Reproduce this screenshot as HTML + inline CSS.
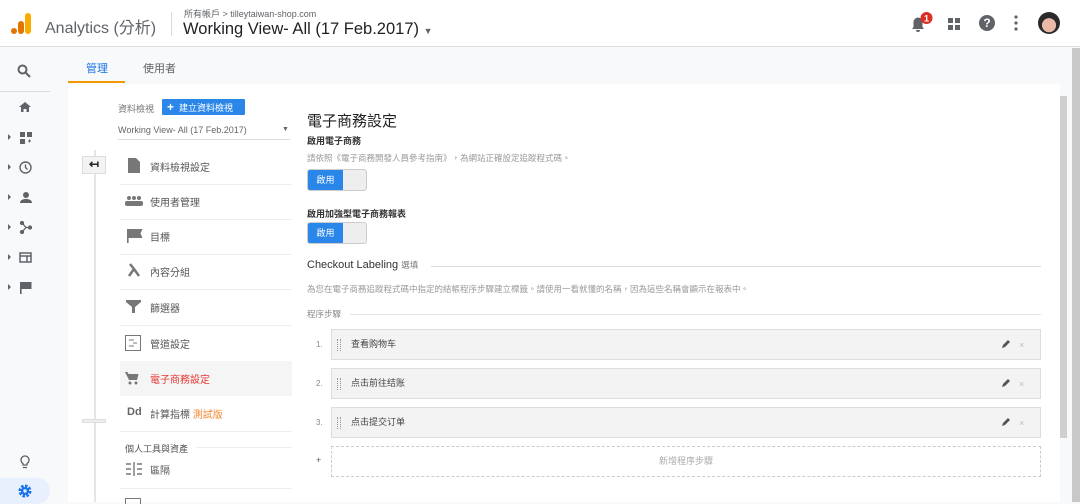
<!DOCTYPE html>
<html><head><meta charset="utf-8"><style>
*{margin:0;padding:0;box-sizing:border-box}
body{width:1080px;height:502px;overflow:hidden;background:#f8f9fa;font-family:"Liberation Sans","Noto Sans CJK TC",sans-serif;color:#333;position:relative}
.a{position:absolute}
.hdr{left:0;top:0;width:1080px;height:47px;background:#fff;border-bottom:1px solid #dadce0}
.nav{left:0;top:48px;width:68px;height:454px;background:#f8f9fa}
.main{left:68px;top:84px;width:992px;height:418px;background:#fff}
.t{font-size:10px;color:#555}
.mi{left:150px;font-size:10px;color:#555}
.sep{left:120px;width:172px;height:1px;background:#eee}
.tog{width:60px;height:22px;border:1px solid #ccc;border-radius:3px;background:#eee;overflow:hidden}
.tog div{width:35px;height:20px;background:#2b86ea;color:#fff;font-size:9px;line-height:20px;text-align:center}
.step{left:331px;width:710px;height:31px;background:#f3f3f3;border:1px solid #ddd;font-size:9px;line-height:29px;padding-left:19px;color:#444}
.num{left:316px;font-size:8px;color:#888}
.dots{left:337px;width:4px;height:12px;border-left:1px dotted #999;border-right:1px dotted #999}
.tri{left:8px;width:0;height:0;border-left:3px solid #666;border-top:3px solid transparent;border-bottom:3px solid transparent}
</style></head><body>
<div class="a hdr"></div>
<svg class="a" style="left:11px;top:13px" width="22" height="22"><rect x="14" y="0" width="6" height="21" rx="3" fill="#f9ab00"/><rect x="7" y="8" width="6" height="13" rx="3" fill="#e37400"/><circle cx="3" cy="18" r="3" fill="#e37400"/></svg>
<div class="a" style="left:45px;top:14px;font-size:16px;color:#5f6368">Analytics (分析)</div>
<div class="a" style="left:171px;top:12px;width:1px;height:24px;background:#dadce0"></div>
<div class="a" style="left:184px;top:7px;font-size:9px;color:#5f6368">所有帳戶 &gt; tilleytaiwan-shop.com</div>
<div class="a" style="left:183px;top:20px;font-size:16.5px;color:#202124">Working View- All (17 Feb.2017) <span style="font-size:9px;color:#5f6368">▼</span></div>
<svg class="a" style="left:910px;top:12px" width="24" height="22"><path d="M2 17h12l-1.5-2V10a4.5 4.5 0 0 0-9 0v5z M6 18h4a2 2 0 0 1-4 0" fill="#5f6368"/><circle cx="16.5" cy="6" r="6" fill="#d93025"/><text x="16.5" y="9.5" font-size="9" fill="#fff" text-anchor="middle" font-family="Liberation Sans" font-weight="bold">1</text></svg>
<svg class="a" style="left:948px;top:18px" width="12" height="12" fill="#5f6368"><rect width="5" height="5"/><rect x="7" width="5" height="5"/><rect y="7" width="5" height="5"/><rect x="7" y="7" width="5" height="5"/></svg>
<div class="a" style="left:979px;top:15px;width:16px;height:16px;border-radius:50%;background:#5f6368;color:#fff;font-size:12px;font-weight:bold;text-align:center;line-height:16px">?</div>
<svg class="a" style="left:1014px;top:15px" width="4" height="16" fill="#5f6368"><circle cx="2" cy="2" r="1.6"/><circle cx="2" cy="8" r="1.6"/><circle cx="2" cy="14" r="1.6"/></svg>
<div class="a" style="left:1038px;top:12px;width:22px;height:22px;border-radius:50%;background:radial-gradient(circle at 50% 60%,#e9b9a8 40%,#2a2a2a 42%)"></div>

<div class="a nav"></div>
<svg class="a" style="left:17px;top:64px" width="14" height="14" fill="none" stroke="#5f6368" stroke-width="2"><circle cx="5.5" cy="5.5" r="4"/><path d="M8.5 8.5l4.5 4.5"/></svg>
<div class="a" style="left:0;top:91px;width:50px;height:1px;background:#dadce0"></div>
<svg class="a" style="left:19px;top:102px" width="12" height="10" fill="#5f6368"><path d="M6 0l6 5h-2v5H7.5V7h-3v3H2V5H0z"/></svg>
<div class="a tri" style="top:134px"></div><svg class="a" style="left:20px;top:132px" width="12" height="12" fill="#5f6368"><rect width="5" height="5"/><rect x="7" width="5" height="5"/><rect y="7" width="5" height="5"/><path d="M8 9h3M9.5 7.5v3" stroke="#5f6368"/></svg>
<div class="a tri" style="top:164px"></div><svg class="a" style="left:19px;top:161px" width="13" height="13" fill="none" stroke="#5f6368" stroke-width="1.4"><circle cx="6.5" cy="6.5" r="5.5"/><path d="M6.5 3.5v3l2 2"/></svg>
<div class="a tri" style="top:194px"></div><svg class="a" style="left:20px;top:192px" width="12" height="11" fill="#5f6368"><circle cx="6" cy="3" r="3"/><path d="M0 11c0-3 3-4 6-4s6 1 6 4z"/></svg>
<div class="a tri" style="top:224px"></div><svg class="a" style="left:19px;top:221px" width="13" height="13" fill="#5f6368" stroke="#5f6368" stroke-width="1.3"><path d="M3 2l4 4.5-4 4.5M7 6.5h4" fill="none"/><circle cx="3" cy="2" r="1.5"/><circle cx="3" cy="11" r="1.5"/><circle cx="11" cy="6.5" r="1.5"/></svg>
<div class="a tri" style="top:254px"></div><svg class="a" style="left:19px;top:252px" width="13" height="11" fill="none" stroke="#5f6368" stroke-width="1.5"><rect x="1" y="1" width="11" height="9"/><path d="M1 4h11M8 4v6"/></svg>
<div class="a tri" style="top:284px"></div><svg class="a" style="left:20px;top:282px" width="12" height="12" fill="#5f6368"><rect width="1.6" height="12"/><path d="M1.5 0h10v7h-10z"/></svg>
<svg class="a" style="left:20px;top:455px" width="10" height="14" fill="none" stroke="#5f6368" stroke-width="1.3"><path d="M3 10V8.5A4 4 0 1 1 7 8.5V10zM3 12.5h4"/></svg>
<div class="a" style="left:0;top:478px;width:50px;height:26px;border-radius:0 13px 13px 0;background:#e8f0fe"></div>
<svg class="a" style="left:18px;top:484px" width="14" height="14"><circle cx="7" cy="7" r="5" fill="none" stroke="#1a73e8" stroke-width="3" stroke-dasharray="2.5 1.4"/><circle cx="7" cy="7" r="4" fill="#1a73e8"/><circle cx="7" cy="7" r="1.7" fill="#e8f0fe"/></svg>

<div class="a" style="left:86px;top:60px;font-size:11px;color:#1a73e8">管理</div>
<div class="a" style="left:143px;top:60px;font-size:11px;color:#5f6368">使用者</div>
<div class="a" style="left:68px;top:81px;width:57px;height:2px;background:#f29900"></div>

<div class="a main"></div>
<div class="a" style="left:1072px;top:48px;width:8px;height:454px;background:#c8c8c8"></div>
<div class="a" style="left:1060px;top:96px;width:7px;height:342px;background:#cfcfcf"></div>

<div class="a" style="left:94px;top:150px;width:2px;height:352px;background:#e5e5e5"></div>
<div class="a" style="left:82px;top:156px;width:24px;height:18px;background:#f3f3f3;border:1px solid #ddd;font-size:12px;text-align:center;line-height:15px;color:#222;font-weight:bold">↤</div>
<div class="a" style="left:82px;top:419px;width:24px;height:4px;background:#eee;border:1px solid #ddd"></div>

<div class="a t" style="left:118px;top:102px;font-size:9px;color:#777">資料檢視</div>
<div class="a" style="left:162px;top:99px;width:83px;height:16px;background:#2b86ea;color:#fff;font-size:9px;line-height:16px;padding-left:5px;border-radius:1px"><b style="font-size:12px">+</b>&nbsp; 建立資料檢視</div>
<div class="a" style="left:118px;top:125px;font-size:9px;color:#666">Working View- All (17 Feb.2017)</div>
<div class="a" style="left:282px;top:126px;font-size:7px;color:#666">▼</div>
<div class="a" style="left:118px;top:139px;width:172px;height:1px;background:#ddd"></div>

<svg class="a" style="left:128px;top:158px" width="12" height="15" fill="#777"><path d="M0 0h8l4 4v11H0z"/></svg>
<div class="a mi" style="top:159px">資料檢視設定</div>
<div class="a sep" style="top:184px"></div>
<svg class="a" style="left:125px;top:196px" width="18" height="10" fill="#777"><circle cx="4" cy="2" r="2"/><circle cx="9" cy="2" r="2"/><circle cx="14" cy="2" r="2"/><rect x="0" y="5" width="18" height="5" rx="2"/></svg>
<div class="a mi" style="top:194px">使用者管理</div>
<div class="a sep" style="top:219px"></div>
<svg class="a" style="left:127px;top:229px" width="16" height="14" fill="#777"><rect width="1.6" height="14"/><path d="M1.5 0h14l-2 4.5 2 4.5h-14z"/></svg>
<div class="a mi" style="top:229px">目標</div>
<div class="a sep" style="top:254px"></div>
<svg class="a" style="left:127px;top:263px" width="14" height="14" fill="none" stroke="#777" stroke-width="2.5"><path d="M3 1l4 5 5 7M7 6l-5 7"/></svg>
<div class="a mi" style="top:264px">內容分組</div>
<div class="a sep" style="top:289px"></div>
<svg class="a" style="left:126px;top:300px" width="15" height="13" fill="#777"><path d="M0 0h15v2L9 7v6H6V7L0 2z"/></svg>
<div class="a mi" style="top:300px">篩選器</div>
<div class="a sep" style="top:325px"></div>
<svg class="a" style="left:125px;top:335px" width="16" height="16" fill="none" stroke="#777" stroke-width="1"><rect x="0.5" y="0.5" width="15" height="15"/><path d="M4 5h5M8 8h4M4 11h5"/></svg>
<div class="a mi" style="top:336px">管道設定</div>
<div class="a" style="left:120px;top:361px;width:172px;height:35px;background:#f5f5f5"></div>
<svg class="a" style="left:125px;top:372px" width="14" height="13" fill="#777"><path d="M0 0h2.5l1 2h10l-1.5 6H4z"/><circle cx="5" cy="11" r="1.5"/><circle cx="11" cy="11" r="1.5"/></svg>
<div class="a mi" style="top:371px;color:#e53935">電子商務設定</div>
<div class="a" style="left:127px;top:406px;font-size:11px;font-weight:bold;color:#666">Dd</div>
<div class="a mi" style="top:406px">計算指標 <span style="color:#f0862f">測試版</span></div>
<div class="a sep" style="top:431px"></div>
<div class="a" style="left:125px;top:442px;font-size:9px;color:#555">個人工具與資產</div>
<div class="a" style="left:196px;top:447px;width:96px;height:1px;background:#eee"></div>
<svg class="a" style="left:126px;top:462px" width="16" height="14" stroke="#777" stroke-width="1.4"><path d="M0 2h5M0 7h5M0 12h5M8 0v14M11 2h5M11 7h5M11 12h5"/></svg>
<div class="a mi" style="top:462px">區隔</div>
<div class="a sep" style="top:488px"></div>
<div class="a" style="left:125px;top:498px;width:16px;height:6px;border:1px solid #777;border-bottom:none"></div>

<div class="a" style="left:307px;top:110px;font-size:15px;color:#222">電子商務設定</div>
<div class="a" style="left:307px;top:134px;font-size:9px;font-weight:bold;color:#333">啟用電子商務</div>
<div class="a" style="left:307px;top:152px;font-size:8.5px;color:#999">請依照《電子商務開發人員參考指南》，為網站正確設定追蹤程式碼。</div>
<div class="a tog" style="left:307px;top:169px"><div>啟用</div></div>
<div class="a" style="left:307px;top:207px;font-size:9px;font-weight:bold;color:#333">啟用加強型電子商務報表</div>
<div class="a tog" style="left:307px;top:222px"><div>啟用</div></div>
<div class="a" style="left:307px;top:259px;font-size:11px;color:#333">Checkout Labeling <span style="font-size:8.5px;color:#777">選填</span></div>
<div class="a" style="left:431px;top:266px;width:610px;height:1px;background:#ddd"></div>
<div class="a" style="left:307px;top:283px;font-size:8.5px;color:#999">為您在電子商務追蹤程式碼中指定的結帳程序步驟建立標籤。請使用一看就懂的名稱，因為這些名稱會顯示在報表中。</div>
<div class="a" style="left:307px;top:308px;font-size:8.5px;color:#888">程序步驟</div>
<div class="a" style="left:350px;top:314px;width:691px;height:1px;background:#e5e5e5"></div>

<div class="a num" style="top:340px">1.</div><div class="a step" style="top:329px">查看购物车</div><div class="a dots" style="top:339px"></div>
<div class="a num" style="top:379px">2.</div><div class="a step" style="top:368px">点击前往结账</div><div class="a dots" style="top:378px"></div>
<div class="a num" style="top:418px">3.</div><div class="a step" style="top:407px">点击提交订单</div><div class="a dots" style="top:417px"></div>
<svg class="a" style="left:1001px;top:339px" width="10" height="10"><path d="M1 9l1-3 5-5 2 2-5 5z" fill="#555"/></svg><div class="a" style="left:1019px;top:340px;font-size:9px;color:#bbb">×</div>
<svg class="a" style="left:1001px;top:378px" width="10" height="10"><path d="M1 9l1-3 5-5 2 2-5 5z" fill="#555"/></svg><div class="a" style="left:1019px;top:379px;font-size:9px;color:#bbb">×</div>
<svg class="a" style="left:1001px;top:417px" width="10" height="10"><path d="M1 9l1-3 5-5 2 2-5 5z" fill="#555"/></svg><div class="a" style="left:1019px;top:418px;font-size:9px;color:#bbb">×</div>
<div class="a" style="left:316px;top:455px;font-size:9px;color:#555">+</div>
<div class="a" style="left:331px;top:446px;width:710px;height:31px;border:1px dashed #ccc;font-size:9px;color:#aaa;text-align:center;line-height:29px">新增程序步驟</div>
</body></html>
